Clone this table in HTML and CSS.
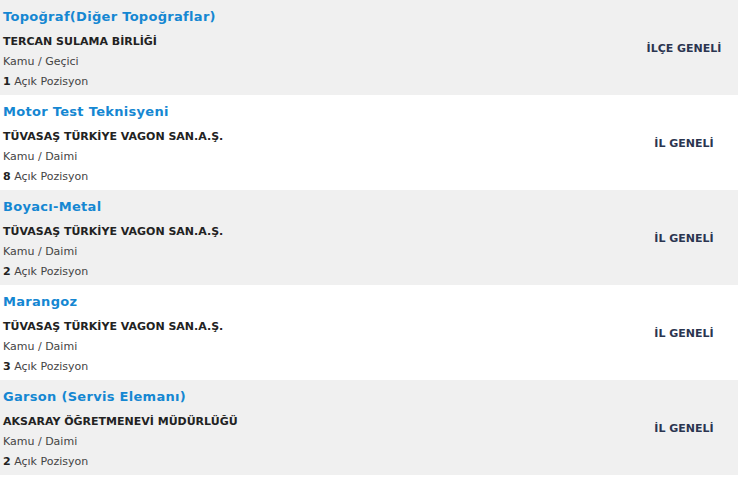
FILE: index.html
```html
<!DOCTYPE html>
<html lang="tr">
<head>
<meta charset="utf-8">
<link rel="stylesheet" href="styles.css">
</head>
<body>
<div class="list">
  <div class="row alt">
    <div class="info">
      <div class="title">Topoğraf(Diğer Topoğraflar)</div>
      <div class="company">TERCAN SULAMA BİRLİĞİ</div>
      <div class="meta">Kamu / Geçici</div>
      <div class="meta"><b>1</b> Açık Pozisyon</div>
    </div>
    <div class="scope">İLÇE GENELİ</div>
  </div>
  <div class="row">
    <div class="info">
      <div class="title">Motor Test Teknisyeni</div>
      <div class="company">TÜVASAŞ TÜRKİYE VAGON SAN.A.Ş.</div>
      <div class="meta">Kamu / Daimi</div>
      <div class="meta"><b>8</b> Açık Pozisyon</div>
    </div>
    <div class="scope">İL GENELİ</div>
  </div>
  <div class="row alt">
    <div class="info">
      <div class="title">Boyacı-Metal</div>
      <div class="company">TÜVASAŞ TÜRKİYE VAGON SAN.A.Ş.</div>
      <div class="meta">Kamu / Daimi</div>
      <div class="meta"><b>2</b> Açık Pozisyon</div>
    </div>
    <div class="scope">İL GENELİ</div>
  </div>
  <div class="row">
    <div class="info">
      <div class="title">Marangoz</div>
      <div class="company">TÜVASAŞ TÜRKİYE VAGON SAN.A.Ş.</div>
      <div class="meta">Kamu / Daimi</div>
      <div class="meta"><b>3</b> Açık Pozisyon</div>
    </div>
    <div class="scope">İL GENELİ</div>
  </div>
  <div class="row alt">
    <div class="info">
      <div class="title">Garson (Servis Elemanı)</div>
      <div class="company">AKSARAY ÖĞRETMENEVİ MÜDÜRLÜĞÜ</div>
      <div class="meta">Kamu / Daimi</div>
      <div class="meta"><b>2</b> Açık Pozisyon</div>
    </div>
    <div class="scope">İL GENELİ</div>
  </div>
</div>
</body>
</html>
```

FILE: styles.css
```css
html, body {
  margin: 0;
  padding: 0;
  background: #ffffff;
}
body {
  font-family: "DejaVu Sans", Verdana, sans-serif;
  font-size: 11px;
}
.list {
  display: flex;
  flex-direction: column;
}
.row {
  display: flex;
  align-items: center;
  height: 95px;
  box-sizing: border-box;
  padding: 7px 0 3px 3px;
  background: #ffffff;
}
.row.alt {
  background: #f0f0f0;
}
.info {
  flex: 1;
  align-self: flex-start;
}
.title {
  font-size: 13px;
  font-weight: bold;
  color: #1587d2;
  line-height: 20px;
  letter-spacing: 0.3px;
  margin-bottom: 5px;
}
.company {
  font-weight: bold;
  color: #222222;
  line-height: 20px;
}
.meta {
  color: #444444;
  line-height: 20px;
}
.meta b {
  color: #222222;
}
.scope {
  width: 108px;
  text-align: center;
  font-weight: bold;
  color: #2b3550;
  padding-bottom: 3px;
}
```
